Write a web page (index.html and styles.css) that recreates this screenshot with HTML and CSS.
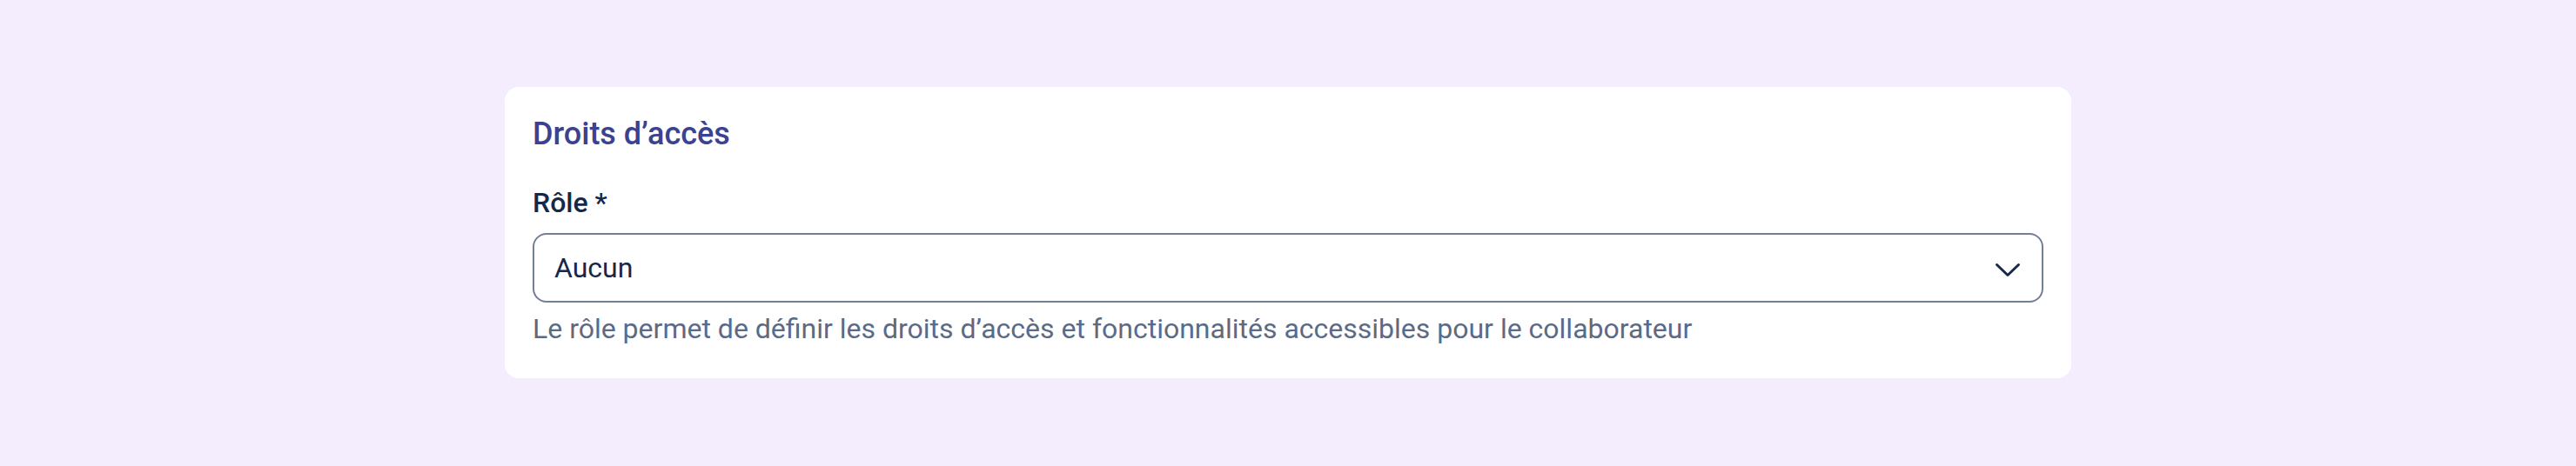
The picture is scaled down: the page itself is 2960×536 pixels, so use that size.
FILE: index.html
```html
<!DOCTYPE html>
<html lang="fr">
<head>
<meta charset="utf-8">
<link rel="stylesheet" href="styles.css">
</head>
<body>
<main class="page">
  <section class="card">
    <h2 class="card-title">Droits d’accès</h2>
    <label class="field-label" for="role">Rôle *</label>
    <div class="select" id="role">
      <span class="select-value">Aucun</span>
      <svg class="chevron" width="30" height="17" viewBox="0 0 30 17" aria-hidden="true">
        <path d="M2.5 2.5 L15 14.5 L27.5 2.5" fill="none" stroke="#172a4c" stroke-width="3" stroke-linecap="round" stroke-linejoin="round"/>
      </svg>
    </div>
    <p class="helper">Le rôle permet de définir les droits d’accès et fonctionnalités accessibles pour le collaborateur</p>
  </section>
</main>
</body>
</html>
```
FILE: styles.css
```css
* { box-sizing: border-box; }
html, body { margin: 0; padding: 0; }
body {
  background: #f4edfd;
  font-family: Roboto, "Liberation Sans", sans-serif;
  width: 2960px;
  height: 536px;
}
.page {
  padding: 100px 580px 0 580px;
}
.card {
  background: #ffffff;
  border-radius: 16px;
  padding: 30px 32px 37px 32px;
  display: flex;
  flex-direction: column;
}
.card-title {
  margin: 0;
  font-size: 36px;
  line-height: 48px;
  font-weight: 500;
  color: #3b4290;
}
.field-label {
  margin-top: 35px;
  font-size: 32px;
  line-height: 40px;
  font-weight: 500;
  color: #14284b;
}
.select {
  margin-top: 15px;
  height: 80px;
  border: 2px solid #737f95;
  border-radius: 16px;
  padding: 0 24px 0 23px;
  display: flex;
  align-items: center;
  justify-content: space-between;
}
.select-value {
  font-size: 32px;
  line-height: 40px;
  color: #14284b;
}
.chevron {
  display: block;
  margin-top: 4px;
}
.helper {
  margin: 10px 0 0 0;
  font-size: 32px;
  line-height: 40px;
  color: #5b6a86;
}
```
